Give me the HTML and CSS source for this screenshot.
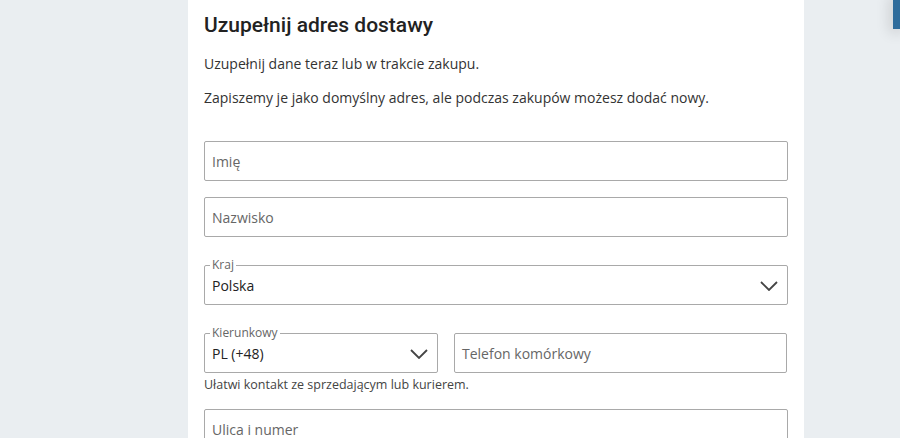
FILE: index.html
```html
<!DOCTYPE html>
<html lang="pl">
<head>
<meta charset="utf-8">
<link rel="stylesheet" href="styles.css">
</head>
<body>
<div class="page">
  <main class="card">
    <h2 class="title">Uzupełnij adres dostawy</h2>
    <p class="text">Uzupełnij dane teraz lub w trakcie zakupu.</p>
    <p class="text">Zapiszemy je jako domyślny adres, ale podczas zakupów możesz dodać nowy.</p>
    <form class="form">
      <div class="field"><span class="placeholder">Imię</span></div>
      <div class="field"><span class="placeholder">Nazwisko</span></div>
      <div class="field select">
        <span class="label">Kraj</span>
        <span class="value">Polska</span>
        <svg class="chevron" width="18" height="10" viewBox="0 0 18 10"><path d="M1 1l8 8 8-8" fill="none" stroke="#444" stroke-width="1.8"/></svg>
      </div>
      <div class="phone">
        <div class="row">
          <div class="field select code">
            <span class="label">Kierunkowy</span>
            <span class="value">PL (+48)</span>
            <svg class="chevron" width="18" height="10" viewBox="0 0 18 10"><path d="M1 1l8 8 8-8" fill="none" stroke="#444" stroke-width="1.8"/></svg>
          </div>
          <div class="field grow"><span class="placeholder">Telefon komórkowy</span></div>
        </div>
        <div class="hint">Ułatwi kontakt ze sprzedającym lub kurierem.</div>
      </div>
      <div class="field last"><span class="placeholder">Ulica i numer</span></div>
    </form>
  </main>
  <div class="side-tab"></div>
</div>
</body>
</html>
```

FILE: styles.css
```css
* { box-sizing: border-box; }
html, body { margin: 0; padding: 0; }
body {
  background: #eaeef1;
  font-family: "Open Sans", "Liberation Sans", sans-serif;
  color: #333;
  height: 438px;
  overflow: hidden;
}
.page {
  position: relative;
  height: 438px;
}
.card {
  margin-left: 188px;
  width: 616px;
  background: #fff;
  padding: 12px 16px 0;
  min-height: 438px;
}
.title {
  margin: 0;
  font-family: Roboto, "Liberation Sans", sans-serif;
  font-weight: 500;
  font-size: 21px;
  line-height: 26px;
  color: #222;
}
.text {
  margin: 16px 0 0;
  font-size: 14px;
  line-height: 20px;
  color: #333;
}
.text + .text { margin-top: 14px; }
.form {
  margin-top: 33px;
  display: flex;
  flex-direction: column;
  gap: 16px;
}
.field {
  position: relative;
  height: 40px;
  border: 1px solid #a9a9a9;
  border-radius: 2px;
  display: flex;
  align-items: center;
  padding: 0 7px;
  font-size: 14px;
}
.placeholder { color: #666; padding-top: 1px; }
.select { margin-top: 12px; }
.value { color: #222; padding-top: 1px; }
.label {
  position: absolute;
  left: 5px;
  top: -9px;
  background: #fff;
  padding: 0 2px;
  font-size: 12px;
  line-height: 16px;
  color: #666;
}
.chevron {
  margin-left: auto;
  margin-right: 2px;
  margin-top: 1px;
}
.phone { margin-top: 12px; }
.phone .select { margin-top: 0; }
.row {
  display: flex;
  gap: 16px;
}
.code { width: 234px; flex: none; }
.grow { flex: 1; margin-right: 1px; }
.hint {
  margin-top: 4px;
  font-size: 12.5px;
  line-height: 16px;
  color: #444;
}
.last { flex: none; }
.side-tab {
  position: absolute;
  top: 0;
  right: 0;
  width: 7px;
  height: 29px;
  background: #2e6c9b;
  box-shadow: 0 0 14px 4px rgba(0, 0, 0, 0.12);
}
```
